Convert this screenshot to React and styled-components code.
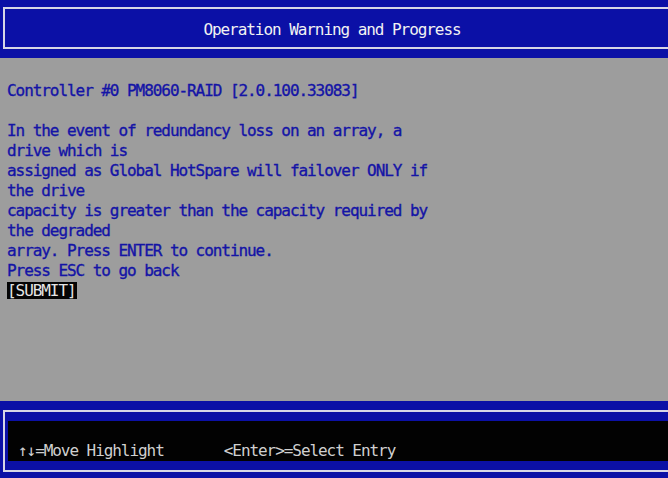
import styled, { createGlobalStyle } from "styled-components";

const GlobalStyle = createGlobalStyle`
  html, body {
    margin: 0;
    padding: 0;
    background: #9d9d9d;
  }
  body {
    font-family: "DejaVu Sans Mono", "Liberation Mono", monospace;
    font-size: 16px;
    letter-spacing: -1.06px;
    overflow: hidden;
  }
`;

const Screen = styled.div`
  width: 668px;
  height: 478px;
  display: flex;
  flex-direction: column;
  background: #9d9d9d;
  overflow: hidden;
`;

const TopBar = styled.div`
  height: 58px;
  background: #0b10a6;
  padding-top: 7px;
  box-sizing: border-box;
`;

const TitleFrame = styled.div`
  margin-left: 3px;
  margin-right: -20px;
  height: 42px;
  box-sizing: border-box;
  border: 2px solid #d6d6e6;
  display: flex;
  align-items: center;
  justify-content: center;
  padding: 3px 27px 0 0;
  color: #f2f2f2;
`;

const Body = styled.div`
  flex: 1;
  padding: 23px 0 0 7px;
  color: #1414a6;
  line-height: 20px;
  -webkit-text-stroke: 0.35px #1414a6;
`;

const Line = styled.div`
  white-space: pre;
  margin-bottom: ${(p) => (p.$gap ? "20px" : "0")};
`;

const Submit = styled.span`
  display: inline-block;
  margin-top: 1px;
  background: #050505;
  color: #e4e4e4;
  -webkit-text-stroke: 0;
  line-height: 17px;
  padding: 0 1px 0 0;
`;

const BottomBar = styled.div`
  height: 77px;
  background: #0b10a6;
  padding-top: 9px;
  box-sizing: border-box;
`;

const HelpFrame = styled.div`
  margin-left: 3px;
  margin-right: -20px;
  height: 62px;
  box-sizing: border-box;
  border: 2px solid #d6d6e6;
  padding: 9px 0 8px 3px;
`;

const HelpPanel = styled.div`
  height: 40px;
  background: #020202;
  color: #d0d0d0;
  display: flex;
  align-items: flex-end;
  padding: 0 0 0 10px;
  box-sizing: border-box;
  white-space: pre;
  line-height: 20px;
`;

const lines = [
  "In the event of redundancy loss on an array, a",
  "drive which is",
  "assigned as Global HotSpare will failover ONLY if",
  "the drive",
  "capacity is greater than the capacity required by",
  "the degraded",
  "array. Press ENTER to continue.",
  "Press ESC to go back",
];

export default function App() {
  return (
    <>
      <GlobalStyle />
      <Screen>
        <TopBar>
          <TitleFrame>Operation Warning and Progress</TitleFrame>
        </TopBar>
        <Body>
          <Line $gap>Controller #0 PM8060-RAID [2.0.100.33083]</Line>
          {lines.map((l) => (
            <Line key={l}>{l}</Line>
          ))}
          <Submit>[SUBMIT]</Submit>
        </Body>
        <BottomBar>
          <HelpFrame>
            <HelpPanel>{"↑↓=Move Highlight       <Enter>=Select Entry"}</HelpPanel>
          </HelpFrame>
        </BottomBar>
      </Screen>
    </>
  );
}
